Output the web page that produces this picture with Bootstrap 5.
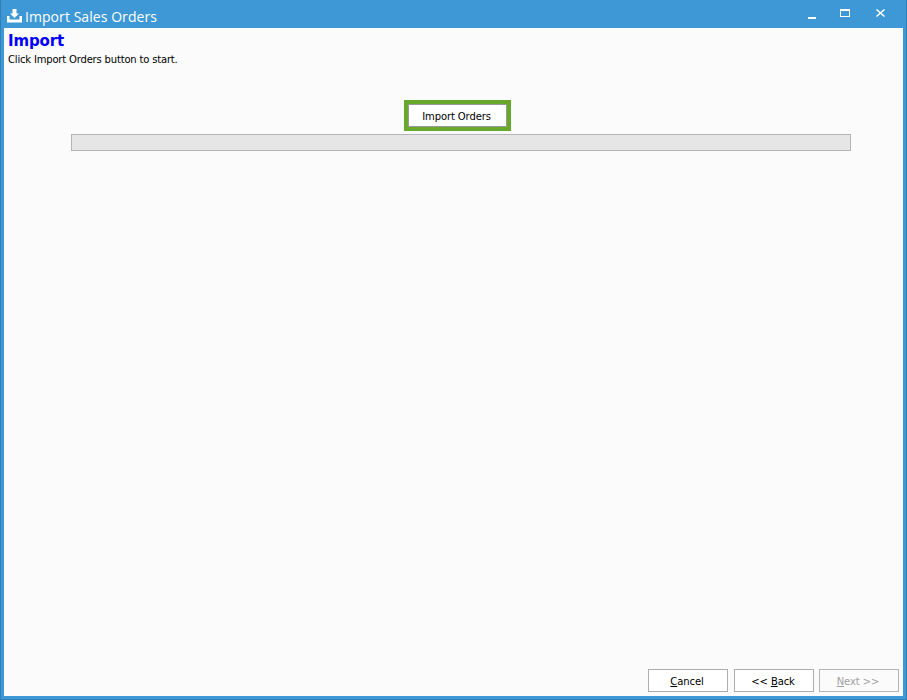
<!DOCTYPE html>
<html lang="en">
<head>
    <meta charset="UTF-8">
    <meta name="viewport" content="width=device-width, initial-scale=1.0">
    <title>Import Sales Orders</title>
    <link href="https://cdn.jsdelivr.net/npm/bootstrap@5.3.0/dist/css/bootstrap.min.css" rel="stylesheet">
    <style>
        html, body {
            height: 100%;
            overflow: hidden;
        }
        body {
            background-color: #3d98d5;
            font-family: "Open Sans", "Liberation Sans", sans-serif;
            font-size: 11px;
            color: #000;
        }
        .app-window {
            height: 700px;
            border: 1px solid #2f7fb8;
            border-top: 0;
            padding: 0 3px 3px 3px;
        }
        .title-bar {
            height: 28px;
            color: #fff;
            font-size: 14px;
            padding: 4px 0 0 3px;
        }
        .title-text {
            margin-left: 3px;
            letter-spacing: 0.06px;
        }
        .win-btn {
            width: 32px;
            height: 26px;
        }
        .win-btns {
            margin: -5px 7px 0 0;
            gap: 3px;
        }
        .win-min {
            margin-right: -2px;
        }
        .wizard-body {
            background-color: #fbfbfb;
        }
        .wizard-head {
            padding: 3px 4px 0 4px;
        }
        .wizard-title {
            font-family: "DejaVu Sans", sans-serif;
            font-size: 15px;
            font-weight: 700;
            color: #0000ff;
            line-height: 20px;
            margin: 0;
            letter-spacing: -0.15px;
        }
        .wizard-hint {
            font-family: "DejaVu Sans", sans-serif;
            font-size: 10px;
            line-height: 14px;
            margin: 2px 0 0 0;
            letter-spacing: -0.18px;
        }
        .import-row {
            margin-top: 33px;
            padding-left: 8px;
        }
        .import-btn {
            width: 107px;
            height: 31px;
            border: 4px solid #68a82a;
            background: #fff;
            box-shadow: inset 0 0 0 1px #999;
            font-family: "DejaVu Sans", sans-serif;
            font-size: 10px;
            letter-spacing: -0.1px;
            color: #000;
            padding: 1px 2px 0 0;
        }
        .import-bar {
            height: 17px;
            margin: 3px 52px 0 67px;
            background-color: #e6e6e6;
            border: 1px solid #b4b4b4;
            border-radius: 0;
        }
        .wizard-foot {
            padding: 0 4px 4px 0;
            gap: 6px;
        }
        .foot-btn {
            width: 80px;
            height: 23px;
            border: 1px solid #adadad;
            background: #fff;
            font-family: "DejaVu Sans", sans-serif;
            font-size: 10px;
            letter-spacing: -0.1px;
            color: #000;
            padding: 2px 2px 0 0;
        }
        .foot-btn:disabled {
            color: #a0a0a0;
            background: #fbfbfb;
            border-color: #b5b5b5;
            margin-left: -1px;
        }
    </style>
</head>
<body>
    <div class="app-window d-flex flex-column">
        <div class="title-bar d-flex align-items-center flex-shrink-0">
            <svg width="15" height="14" viewBox="0 0 15 14" fill="#fff">
                <path d="M5.5 0h4v4.5h2.5L7.500 9 3 4.500h2.500z"/>
                <path d="M0 7h2.500v3.500h10V7H15v6.500H0z"/>
            </svg>
            <span class="title-text">Import Sales Orders</span>
            <div class="win-btns ms-auto d-flex">
                <div class="win-btn win-min d-flex align-items-center justify-content-center">
                    <svg width="10" height="10" viewBox="0 0 10 10" fill="#fff"><rect x="1" y="8" width="8" height="2"/></svg>
                </div>
                <div class="win-btn d-flex align-items-center justify-content-center">
                    <svg width="10" height="9" viewBox="0 0 10 9" fill="none" stroke="#fff"><rect x="0.500" y="0.500" width="9" height="7"/><path d="M0 1.500h10"/></svg>
                </div>
                <div class="win-btn d-flex align-items-center justify-content-center">
                    <svg width="9" height="9" viewBox="0 0 9 9" fill="none" stroke="#fff" stroke-width="1.500"><path d="M0.500 0.500l8 7M8.500 0.500l-8 7"/></svg>
                </div>
            </div>
        </div>
        <div class="wizard-body flex-grow-1 d-flex flex-column">
            <div class="wizard-head">
                <h1 class="wizard-title">Import</h1>
                <p class="wizard-hint">Click Import Orders button to start.</p>
            </div>
            <div class="import-row d-flex justify-content-center">
                <button type="button" class="import-btn">Import Orders</button>
            </div>
            <div class="import-bar"></div>
            <div class="wizard-foot mt-auto d-flex justify-content-end">
                <button type="button" class="foot-btn"><u>C</u>ancel</button>
                <button type="button" class="foot-btn">&lt;&lt; <u>B</u>ack</button>
                <button type="button" class="foot-btn" disabled><u>N</u>ext &gt;&gt;</button>
            </div>
        </div>
    </div>
    <script src="https://cdn.jsdelivr.net/npm/bootstrap@5.3.0/dist/js/bootstrap.bundle.min.js"></script>
</body>
</html>
